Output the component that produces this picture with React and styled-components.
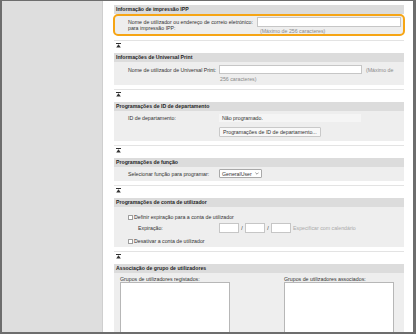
import React from 'react';
import styled, { createGlobalStyle, css } from 'styled-components';

const GlobalStyle = createGlobalStyle`
  html, body {
    margin: 0;
    padding: 0;
    background: #fff;
  }
  body {
    font-family: "Liberation Sans", Arial, sans-serif;
  }
  * {
    box-sizing: border-box;
  }
`;

const Frame = styled.div`
  width: 416px;
  height: 334px;
  display: flex;
  border: solid #6d6d6d;
  border-width: 1px 3px 2px 2px;
  overflow: hidden;
`;

const Sidebar = styled.aside`
  width: 101px;
  flex-shrink: 0;
  background: #dedede;
  border-right: 1px solid #cfcfcf;
`;

const Main = styled.main`
  flex: 1;
  min-width: 0;
  padding: 4px 9px 0 11px;
  overflow: hidden;
  font-size: 5.25px;
  color: #333;
  background: #fff;
`;

const SectionTitle = styled.h2`
  margin: 0;
  height: 9px;
  line-height: 9px;
  padding-left: 2px;
  font-size: 5.2px;
  font-weight: 700;
  color: #1e1e1e;
  background: #dcdcdc;
`;

const SectionBody = styled.div`
  background: #eeeeee;
  padding: ${({ $pad }) => $pad || '0'};

  ${({ $highlight }) =>
    $highlight &&
    css`
      border: 2px solid #f6a515;
      border-radius: 5px;
      margin: 0 -1px;
    `};
`;

const Separator = styled.div`
  margin-top: 4px;
  height: 1px;
  background: #e3e3e3;
`;

const TopLink = styled.div`
  padding: 2px 0 6px 2px;
  height: 12px;
  display: flex;
  align-items: flex-start;
`;

const Row = styled.div`
  display: flex;
  align-items: ${({ $align }) => $align || 'center'};
  margin-top: ${({ $mt }) => $mt || 0}px;
  min-height: ${({ $h }) => $h || 0}px;
`;

const Label = styled.div`
  width: ${({ $width }) => $width || 105}px;
  padding-left: ${({ $indent }) => ($indent === undefined ? 14 : $indent)}px;
  padding-top: ${({ $pt }) => $pt || 0}px;
  flex-shrink: 0;
  line-height: 6px;
`;

const Value = styled.div`
  display: flex;
  flex-direction: column;
  align-items: flex-start;
`;

const InlineValue = styled.div`
  display: flex;
  align-items: center;
`;

const TextInput = styled.div`
  width: ${({ $w }) => $w}px;
  height: ${({ $h }) => $h || 10}px;
  border: 1px solid #c6c6c6;
  background: #fff;
  flex-shrink: 0;
`;

const Hint = styled.span`
  color: #8a8a8a;
  line-height: 6px;
  margin-top: ${({ $mt }) => $mt || 0}px;
  margin-left: ${({ $ml }) => $ml || 0}px;
`;

const ReadOnly = styled.div`
  width: 142px;
  height: 8px;
  line-height: 8px;
  padding-left: 3px;
  background: #f5f5f5;
`;

const Button = styled.button`
  margin: 5px 0 0 0;
  height: 10px;
  padding: 0 3px;
  font-family: inherit;
  font-size: 5.25px;
  line-height: 8px;
  color: #333;
  background: #f8f8f8;
  border: 1px solid #c9c9c9;
  border-radius: 1px;
`;

const Select = styled.div`
  width: 43px;
  height: 9px;
  padding: 0 2px 0 2px;
  display: flex;
  align-items: center;
  justify-content: space-between;
  background: #fff;
  border: 1px solid #a9a9a9;
  border-radius: 1px;
  color: #333;
`;

const CheckLine = styled.label`
  display: flex;
  align-items: center;
  padding-left: 14px;
  height: 10px;
  margin-top: ${({ $mt }) => $mt || 0}px;
`;

const Checkbox = styled.span`
  width: 5px;
  height: 5px;
  margin-right: 1px;
  border: 1px solid #9c9c9c;
  border-radius: 0.5px;
  background: #fff;
`;

const Slash = styled.span`
  width: 6px;
  text-align: center;
  color: #333;
`;

const CalendarHint = styled.span`
  margin-left: 2px;
  color: #ababab;
`;

const Groups = styled.div`
  display: flex;
  justify-content: space-between;
  padding: 3px 10px 0 6px;
`;

const GroupColumn = styled.div`
  width: 110px;
  line-height: 6px;
`;

const ListBox = styled.div`
  height: 80px;
  background: #fff;
  border: 1px solid #b7b7b7;
`;

const TopIcon = () => (
  <svg width="5" height="5" viewBox="0 0 5 5">
    <rect x="0" y="0" width="5" height="1" fill="#333" />
    <polygon points="2.5,1.2 4.8,4.6 0.2,4.6" fill="#333" />
  </svg>
);

const Chevron = () => (
  <svg width="4" height="3" viewBox="0 0 4 3">
    <polyline points="0.4,0.6 2,2.2 3.6,0.6" fill="none" stroke="#555" strokeWidth="0.6" />
  </svg>
);

const Section = ({ title, highlight, pad, children, last }) => (
  <section>
    <SectionTitle>{title}</SectionTitle>
    <SectionBody $highlight={highlight} $pad={pad}>
      {children}
    </SectionBody>
    {!last && (
      <>
        <Separator />
        <TopLink>
          <TopIcon />
        </TopLink>
      </>
    )}
  </section>
);

export default function App() {
  return (
    <>
      <GlobalStyle />
      <Frame>
        <Sidebar />
        <Main>
          <Section title="Informação de impressão IPP" highlight pad="1px 2px 0 0">
            <Row $align="flex-start" $h={17}>
              <Label $width={142} $indent={13} $pt={2}>
                Nome de utilizador ou endereço de correio eletrónico: para impressão IPP:
              </Label>
              <Value>
                <TextInput $w={144} />
                <Hint $mt={1} $ml={3}>(Máximo de 256 caracteres)</Hint>
              </Value>
            </Row>
          </Section>

          <Section title="Informações de Universal Print" pad="3px 0 3px 0">
            <Row $align="flex-start">
              <Label $pt={2}>Nome de utilizador de Universal Print:</Label>
              <Value>
                <InlineValue>
                  <TextInput $w={143} $h={9} />
                  <Hint $ml={4}>(Máximo de</Hint>
                </InlineValue>
                <Hint $mt={2} $ml={1}>256 caracteres)</Hint>
              </Value>
            </Row>
          </Section>

          <Section title="Programações de ID de departamento" pad="3px 0 4px 0">
            <Row $align="flex-start">
              <Label $pt={1}>ID de departamento:</Label>
              <Value>
                <ReadOnly>Não programado.</ReadOnly>
                <Button type="button">Programações de ID de departamento...</Button>
              </Value>
            </Row>
          </Section>

          <Section title="Programações de função" pad="2px 0 3px 0">
            <Row>
              <Label>Selecionar função para programar:</Label>
              <Select>
                <span>GeneralUser</span>
                <Chevron />
              </Select>
            </Row>
          </Section>

          <Section title="Programações de conta de utilizador" pad="5px 0 1px 0">
            <CheckLine>
              <Checkbox />
              Definir expiração para a conta de utilizador
            </CheckLine>
            <Row $mt={1}>
              <Label $indent={24}>Expiração:</Label>
              <InlineValue>
                <TextInput $w={20} />
                <Slash>/</Slash>
                <TextInput $w={20} />
                <Slash>/</Slash>
                <TextInput $w={20} />
                <CalendarHint>Especificar com calendário</CalendarHint>
              </InlineValue>
            </Row>
            <CheckLine $mt={3}>
              <Checkbox />
              Desativar a conta de utilizador
            </CheckLine>
          </Section>

          <Section title="Associação de grupo de utilizadores" last>
            <Groups>
              <GroupColumn>
                Grupos de utilizadores registados:
                <ListBox />
              </GroupColumn>
              <GroupColumn>
                Grupos de utilizadores associados:
                <ListBox />
              </GroupColumn>
            </Groups>
          </Section>
        </Main>
      </Frame>
    </>
  );
}
